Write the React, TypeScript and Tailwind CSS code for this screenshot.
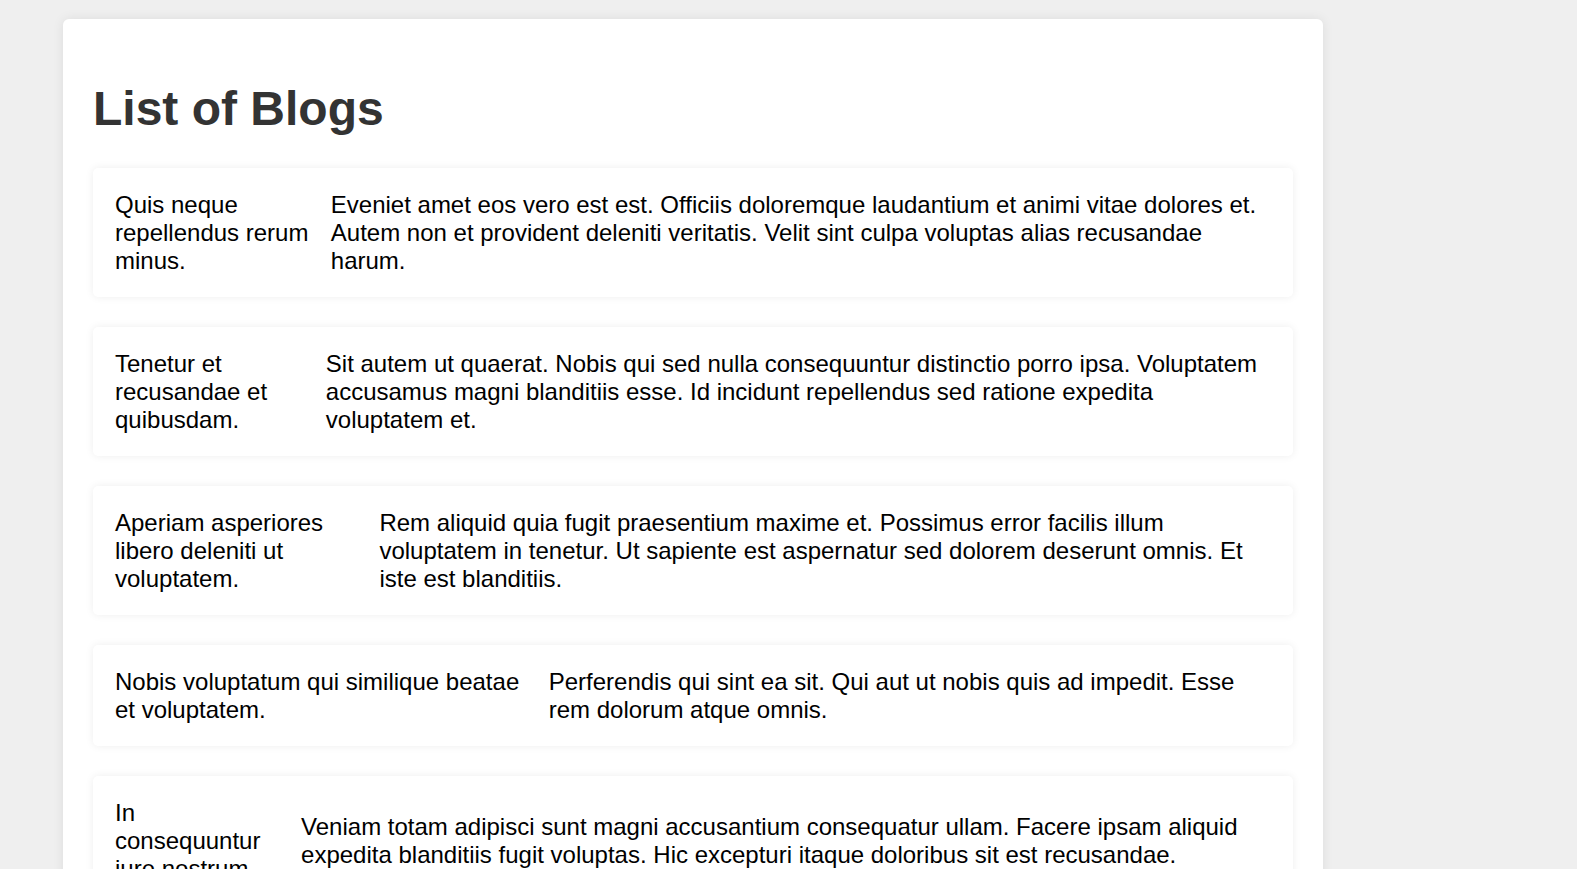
import React from 'react';

type Blog = { id: number; title: string; body: string };

const blogs: Blog[] = [
  {
    id: 1,
    title: 'Quis neque repellendus rerum minus.',
    body: 'Eveniet amet eos vero est est. Officiis doloremque laudantium et animi vitae dolores et. Autem non et provident deleniti veritatis. Velit sint culpa voluptas alias recusandae harum.',
  },
  {
    id: 2,
    title: 'Tenetur et recusandae et quibusdam.',
    body: 'Sit autem ut quaerat. Nobis qui sed nulla consequuntur distinctio porro ipsa. Voluptatem accusamus magni blanditiis esse. Id incidunt repellendus sed ratione expedita voluptatem et.',
  },
  {
    id: 3,
    title: 'Aperiam asperiores libero deleniti ut voluptatem.',
    body: 'Rem aliquid quia fugit praesentium maxime et. Possimus error facilis illum voluptatem in tenetur. Ut sapiente est aspernatur sed dolorem deserunt omnis. Et iste est blanditiis.',
  },
  {
    id: 4,
    title: 'Nobis voluptatum qui similique beatae et voluptatem.',
    body: 'Perferendis qui sint ea sit. Qui aut ut nobis quis ad impedit. Esse rem dolorum atque omnis.',
  },
  {
    id: 5,
    title: 'In consequuntur iure nostrum.',
    body: 'Veniam totam adipisci sunt magni accusantium consequatur ullam. Facere ipsam aliquid expedita blanditiis fugit voluptas. Hic excepturi itaque doloribus sit est recusandae.',
  },
];

const BlogCard: React.FC<{ blog: Blog }> = ({ blog }) => {
  return (
    <div className="flex items-center gap-4 bg-white rounded-[5px] px-[22px] pt-[23px] pb-[22px] shadow-[0_0_8px_rgba(0,0,0,0.07)]">
      <div>{blog.title}</div>
      <div>{blog.body}</div>
    </div>
  );
};

const App: React.FC = () => {
  return (
    <div className="min-h-screen bg-[#efefef] pt-[19px] pl-[63px] font-['Liberation_Sans',Arial,sans-serif] text-[24px] leading-[normal] text-black">
      <div className="w-[1260px] bg-white rounded-[6px] px-[30px] pt-[30px] pb-[30px] shadow-[0_0_12px_rgba(0,0,0,0.08)]">
        <h1 className="text-[48px] font-bold text-[#333] my-[32px] leading-[normal]">List of Blogs</h1>
        <div className="flex flex-col gap-[30px]">
          {blogs.map((blog) => (
            <BlogCard key={blog.id} blog={blog} />
          ))}
        </div>
      </div>
    </div>
  );
};

export default App;
